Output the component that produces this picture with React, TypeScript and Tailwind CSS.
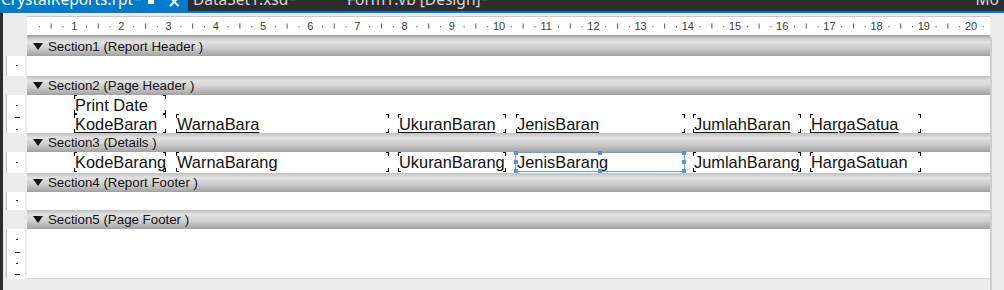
import React from "react";

const UNIT = 47.2;

function Ruler() {
  const items: React.ReactNode[] = [];
  for (let n = 0; n <= 20; n++) {
    const x = n * UNIT;
    if (n > 0) {
      items.push(
        <text key={"t" + n} x={x} y={13} textAnchor="middle" fontSize={11} fill="#3a3a3a" fontFamily="Liberation Sans, Arial, sans-serif">
          {n}
        </text>
      );
    }
    const q1 = x + UNIT * 0.25;
    const q2 = x + UNIT * 0.5;
    const q3 = x + UNIT * 0.75;
    if (q1 < 962) items.push(<rect key={"a" + n} x={q1} y={9} width={1} height={1.3} fill="#555" />);
    if (q2 < 962) items.push(<rect key={"b" + n} x={q2} y={6.5} width={1} height={5} fill="#555" />);
    if (q3 < 962) items.push(<rect key={"c" + n} x={q3} y={9} width={1} height={1.3} fill="#555" />);
  }
  return (
    <svg width={963} height={19} className="block">
      {items}
    </svg>
  );
}

function Band({ label }: { label: string }) {
  return (
    <div className="h-[19px] flex items-center bg-[linear-gradient(to_bottom,#c0c0c0_0%,#e2e2e2_25%,#d0d0d0_55%,#adadad_90%,#a0a0a0_100%)] text-[13.3px] text-[#141414] font-['Liberation_Sans',Arial,sans-serif]">
      <svg width={10} height={8} className="ml-[6px] mr-[5px]" viewBox="0 0 10 8">
        <path d="M0 0 L10 0 L5 7 Z" fill="#111" />
      </svg>
      <span className="leading-none pt-[1px]">{label}</span>
    </div>
  );
}

function Corners() {
  return (
    <>
      <span className="absolute left-0 top-0 w-[1px] h-[4px] bg-black" />
      <span className="absolute left-0 top-0 w-[3px] h-[1px] bg-black" />
      <span className="absolute right-0 top-0 w-[1px] h-[4px] bg-black" />
      <span className="absolute right-0 top-0 w-[3px] h-[1px] bg-black" />
      <span className="absolute left-0 bottom-0 w-[1px] h-[4px] bg-black" />
      <span className="absolute left-0 bottom-0 w-[3px] h-[1px] bg-black" />
      <span className="absolute right-0 bottom-0 w-[1px] h-[4px] bg-black" />
      <span className="absolute right-0 bottom-0 w-[3px] h-[1px] bg-black" />
    </>
  );
}

type FieldProps = { x: number; y: number; w: number; h: number; text: string; underline?: boolean };

function Field({ x, y, w, h, text, underline }: FieldProps) {
  return (
    <div className="absolute" style={{ left: x, top: y, width: w, height: h }}>
      <Corners />
      <span
        className={
          "absolute left-[1px] top-[1px] text-[16.4px] leading-[19px] text-[#111] whitespace-nowrap font-['Liberation_Sans',Arial,sans-serif] " +
          (underline ? "underline decoration-1 underline-offset-[2px]" : "")
        }
      >
        {text}
      </span>
    </div>
  );
}

function Handle({ x, y }: { x: number; y: number }) {
  return <span className="absolute w-[4px] h-[4px] bg-[#5b8fd6]" style={{ left: x - 2, top: y - 2 }} />;
}

function Dash({ y, long }: { y: number; long?: boolean }) {
  return (
    <span
      className={"absolute h-[1px] bg-[#333] " + (long ? "left-[8px] w-[5px]" : "left-[9px] w-[2px]")}
      style={{ top: y }}
    />
  );
}

function LeftSeg({ h, dashes }: { h: number; dashes: { y: number; long?: boolean }[] }) {
  return (
    <div className="relative bg-white border-l border-[#bdbdbd] ml-[3px]" style={{ height: h }}>
      {dashes.map((d, i) => (
        <Dash key={i} y={d.y} long={d.long} />
      ))}
    </div>
  );
}

function LeftGap() {
  return <div className="h-[19px]" />;
}

export default function App() {
  return (
    <div className="w-[1004px] h-[290px] overflow-hidden bg-[#e6e6e6] font-['Liberation_Sans',Arial,sans-serif]">
      {/* tab bar */}
      <div className="h-[11px] bg-[#2d2d30] flex relative overflow-hidden text-[15.5px] font-['Noto_Sans','Open_Sans',sans-serif]">
        <div className="w-[188px] h-full bg-[#007acc] relative text-white">
          <span className="absolute left-[1px] top-[-11px] whitespace-nowrap leading-[20px]">CrystalReports.rpt*</span>
          <span className="absolute left-[148px] top-[-2px] w-[6px] h-[6px] bg-white" />
          <span className="absolute left-[167px] top-[-8px] leading-[20px] text-[17px]">✕</span>
        </div>
        <div className="w-[5px]" />
        <div className="relative w-[150px] text-[#d6d6d6]">
          <span className="absolute left-[0px] top-[-11px] whitespace-nowrap leading-[20px]">DataSet1.xsd*</span>
        </div>
        <div className="relative w-[300px] ml-[4px] text-[#d6d6d6]">
          <span className="absolute left-[0px] top-[-11px] whitespace-nowrap leading-[20px]">Form1.vb [Design]*</span>
        </div>
        <div className="relative flex-1 text-[#d6d6d6]">
          <span className="absolute right-[5px] top-[-11px] whitespace-nowrap leading-[20px]">Mo</span>
        </div>
      </div>
      <div className="h-[2px] bg-[#007acc]" />
      {/* body */}
      <div className="flex h-[277px]">
        <div className="w-[3px] bg-[#2d2d30]" />
        <div className="flex-1 bg-[#ececec] flex flex-col">
          {/* ruler row */}
          <div className="h-[24px] flex">
            <div className="w-[24px]" />
            <div className="w-[963px] mt-[3px] h-[20px] bg-white border-t border-[#c8c8c8]">
              <Ruler />
            </div>
          </div>
          <div className="flex flex-1">
            {/* left ruler */}
            <div className="w-[22px] flex flex-col">
              <LeftGap />
              <LeftSeg h={20} dashes={[{ y: 9 }]} />
              <LeftGap />
              <LeftSeg h={38} dashes={[{ y: 10 }, { y: 22, long: true }, { y: 34 }]} />
              <LeftGap />
              <LeftSeg h={21} dashes={[{ y: 10 }]} />
              <LeftGap />
              <LeftSeg h={18} dashes={[{ y: 8 }]} />
              <LeftGap />
              <LeftSeg h={50} dashes={[{ y: 10 }, { y: 23, long: true }, { y: 34 }, { y: 45, long: true }]} />
            </div>
            <div className="w-[2px]" />
            {/* canvas */}
            <div className="w-[963px] flex flex-col border-t-2 border-[#a8a8a8] -mt-[2px]">
              <Band label="Section1 (Report Header )" />
              <div className="h-[20px] bg-white" />
              <Band label="Section2 (Page Header )" />
              <div className="h-[38px] bg-white relative">
                <Field x={47} y={0} w={92} h={19} text="Print Date" />
                <Field x={47} y={19} w={92} h={19} text="KodeBaran" underline />
                <Field x={149} y={19} w={213} h={19} text="WarnaBara" underline />
                <Field x={371} y={19} w={108} h={19} text="UkuranBaran" underline />
                <Field x={489} y={19} w={169} h={19} text="JenisBaran" underline />
                <Field x={666} y={19} w={108} h={19} text="JumlahBaran" underline />
                <Field x={783} y={19} w={111} h={19} text="HargaSatua" underline />
              </div>
              <Band label="Section3 (Details )" />
              <div className="h-[21px] bg-white relative">
                <Field x={47} y={0} w={92} h={20} text="KodeBarang" />
                <Field x={149} y={0} w={213} h={20} text="WarnaBarang" />
                <Field x={371} y={0} w={108} h={20} text="UkuranBarang" />
                <div className="absolute left-[488px] top-0 w-[170px] h-[20px] border border-[#6fa0dc]">
                  <span className="absolute left-[1px] top-[0px] text-[16.4px] leading-[19px] text-[#111] whitespace-nowrap font-['Liberation_Sans',Arial,sans-serif]">
                    JenisBarang
                  </span>
                </div>
                <Handle x={489} y={1} />
                <Handle x={573} y={1} />
                <Handle x={657} y={1} />
                <Handle x={489} y={10} />
                <Handle x={657} y={10} />
                <Handle x={489} y={19} />
                <Handle x={573} y={19} />
                <Handle x={657} y={19} />
                <Field x={666} y={0} w={108} h={20} text="JumlahBarang" />
                <Field x={783} y={0} w={111} h={20} text="HargaSatuan" />
              </div>
              <Band label="Section4 (Report Footer )" />
              <div className="h-[18px] bg-white" />
              <Band label="Section5 (Page Footer )" />
              <div className="h-[50px] bg-white border-b border-[#d8d8d8]" />
            </div>
            <div className="w-[2px] bg-[#d0d0d0]" />
          </div>
        </div>
      </div>
    </div>
  );
}
